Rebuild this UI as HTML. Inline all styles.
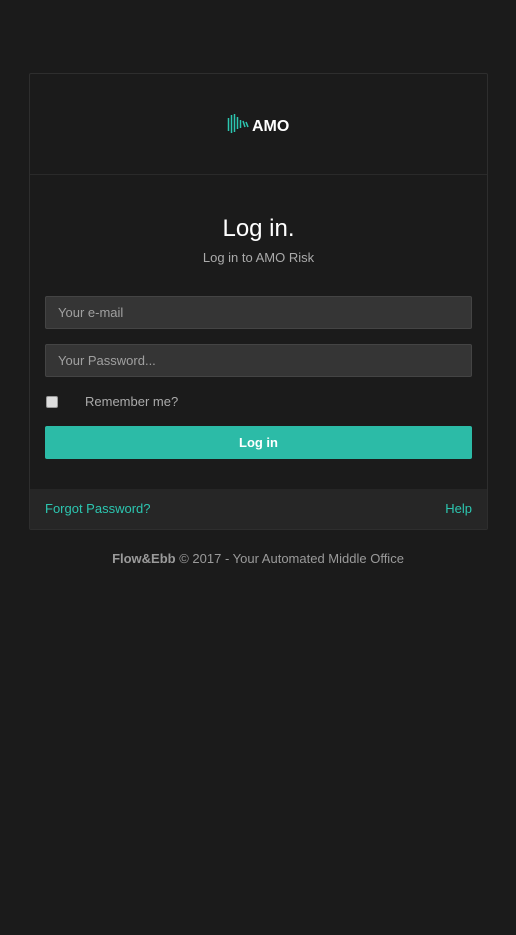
<!DOCTYPE html>
<html><head><style>
body{margin:0;background:#1b1b1b;font-family:"Liberation Sans",sans-serif;width:516px;height:935px;position:relative}
.card{position:absolute;left:29px;top:73px;width:457px;height:455px;border:1px solid #2e2e2e;border-radius:2px;background:#1b1b1b}
.hdr{height:100px;border-bottom:1px solid #2a2a2a;position:relative}
h1{position:absolute;top:141px;width:100%;text-align:center;margin:0;font-weight:normal;color:#fff;font-size:24px}
.sub{position:absolute;top:176px;width:100%;text-align:center;color:#aaa;font-size:13px}
.inp{position:absolute;left:15px;background:#353535;border:1px solid #444;border-radius:2px;color:#a0a0a0;font-size:13px;line-height:31px;padding-left:12px;box-sizing:border-box;width:427px;height:33px}
.cb{position:absolute;left:16px;top:322px;width:10px;height:10px;background:#ddd;border:1px solid #999;border-radius:2px}
.rem{position:absolute;left:55px;top:320px;color:#aaa;font-size:13px}
.btn{position:absolute;left:15px;top:352px;width:427px;height:33px;background:#2cbba7;border-radius:2px;color:#fff;font-weight:bold;font-size:13px;text-align:center;line-height:33px}
.ftr{position:absolute;left:0;top:415px;width:457px;height:40px;background:#262626;color:#2cc6b0;font-size:13px}
.foot{position:absolute;top:551px;width:100%;text-align:center;color:#9a9a9a;font-size:13px}
</style></head><body>
<div class="card">
<div class="hdr">
<svg style="position:absolute;left:195px;top:40px" width="70" height="22" viewBox="0 0 70 22">
<g stroke="#2cc6b0" stroke-width="1.5" fill="none">
<line x1="3.5" y1="4" x2="3.5" y2="17"/><line x1="6.5" y1="1" x2="6.5" y2="19"/><line x1="9.5" y1="0" x2="9.5" y2="18"/><line x1="12.5" y1="3" x2="12.5" y2="15"/><line x1="15.5" y1="6" x2="15.5" y2="14"/><line x1="18" y1="7" x2="20" y2="13"/><line x1="21" y1="8" x2="23" y2="13"/>
</g>
<text x="27" y="17" fill="#fff" font-family="Liberation Sans" font-weight="bold" font-size="16">AMO</text>
</svg>
</div>
<h1>Log in.</h1>
<div class="sub">Log in to AMO Risk</div>
<div class="inp" style="top:222px">Your e-mail</div>
<div class="inp" style="top:270px">Your Password...</div>
<div class="cb"></div>
<div class="rem">Remember me?</div>
<div class="btn">Log in</div>
<div class="ftr"><span style="position:absolute;left:15px;top:12px">Forgot Password?</span><span style="position:absolute;right:15px;top:12px">Help</span></div>
</div>
<div class="foot"><b>Flow&amp;Ebb</b> © 2017 - Your Automated Middle Office</div>
</body></html>
